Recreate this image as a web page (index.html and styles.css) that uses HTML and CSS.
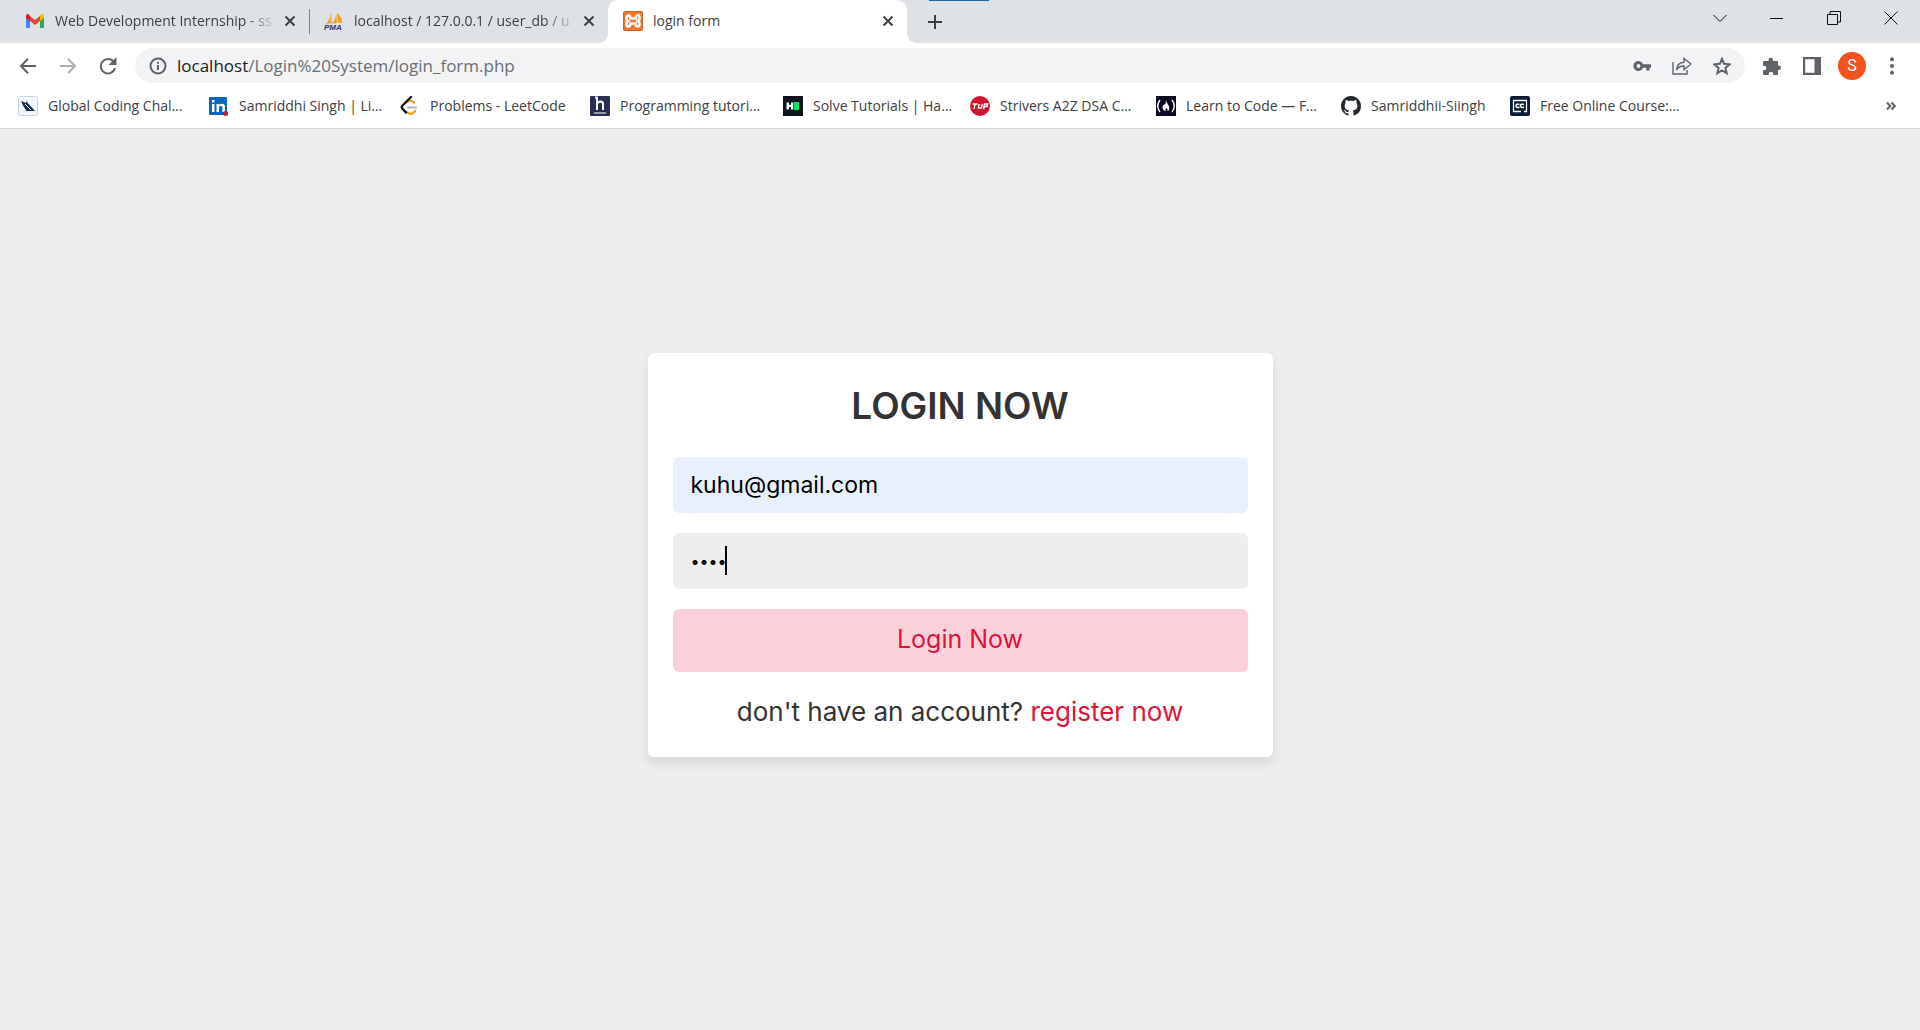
FILE: index.html
```html
<!DOCTYPE html>
<html lang="en">
<head>
<meta charset="utf-8">
<meta name="viewport" content="width=device-width, initial-scale=1">
<title>login form</title>
<link rel="stylesheet" href="styles.css">
</head>
<body>
<header class="browser">
  <div class="tabstrip">
    <div class="tab">
      <svg class="favicon" viewBox="0 0 20 20"><path fill="#4285f4" d="M1 5v11q0 1 1 1h3V9z"/><path fill="#34a853" d="M19 5v11q0 1-1 1h-3V9z"/><path fill="#ea4335" d="M5 5l5 4 5-4v5l-5 4-5-4z"/><path fill="#c5221f" d="M1 5q0-2 2-2 1 0 2 2v5L1 7z"/><path fill="#fbbc04" d="M19 5q0-2-2-2-1 0-2 2v5l4-3z"/></svg>
      <span class="tab-title faded">Web Development Internship - ss</span>
      <button class="tab-close" aria-label="Close tab"><svg viewBox="0 0 12 12"><path d="M1.500 1.500l9 9m0-9l-9 9"/></svg></button>
    </div>
    <div class="tab divided">
      <svg class="favicon" viewBox="0 0 20 20"><path fill="#f89c0e" d="M7 2q-1 7-5 11l6-1zM12 0q1 8-4 12.500l5-.5zM13 2q5 4 5 10l-4-.5z"/><path fill="#fbc37a" d="M7 2l1 7-2 3z"/><text x="0" y="19" class="pma">PMA</text></svg>
      <span class="tab-title faded">localhost / 127.0.0.1 / user_db / u</span>
      <button class="tab-close" aria-label="Close tab"><svg viewBox="0 0 12 12"><path d="M1.500 1.500l9 9m0-9l-9 9"/></svg></button>
    </div>
    <div class="tab active">
      <svg class="favicon" viewBox="0 0 20 20"><rect width="20" height="20" rx="2" fill="#cf6220"/><rect x="1" y="1" width="18" height="18" rx="2" fill="#f0762a"/><path fill="none" stroke="#fff" stroke-width="2.600" stroke-linejoin="round" d="M7.500 7.500Q7.500 4.500 5.500 4.500T3.500 7q0 3 2.500 3-2.500 0-2.500 3t2 2.500 2-3h5q0 3 2 3t2-2.500q0-3-2.500-3 2.500 0 2.500-3t-2-2.500-2 3z"/></svg>
      <span class="tab-title">login form</span>
      <button class="tab-close" aria-label="Close tab"><svg viewBox="0 0 12 12"><path d="M1.500 1.500l9 9m0-9l-9 9"/></svg></button>
    </div>
    <button class="new-tab" aria-label="New tab"><svg viewBox="0 0 16 16"><path d="M8 1v14M1 8h14"/></svg></button>
    <div class="window-controls">
      <button aria-label="Search tabs"><svg viewBox="0 0 14 14"><path d="M.5 4L7 10.500 13.500 4"/></svg></button>
      <button aria-label="Minimize"><svg viewBox="0 0 14 14"><path d="M0 7.500h13"/></svg></button>
      <button aria-label="Restore"><svg viewBox="0 0 14 14"><path d="M.5 3.500h10v10H.5zM3 3V.5h10.500V11H11"/></svg></button>
      <button aria-label="Close"><svg viewBox="0 0 14 14"><path d="M.5.5l13 13m0-13l-13 13"/></svg></button>
    </div>
    <span class="accent-line"></span>
  </div>

  <nav class="toolbar" aria-label="Navigation">
    <button class="tool" aria-label="Back"><svg viewBox="0 0 18 18"><path class="line" d="M17 9H2.500M9 1.800L2 9l7 7.200"/></svg></button>
    <button class="tool dim" aria-label="Forward"><svg viewBox="0 0 18 18"><path class="line" d="M1 9h14.500M9 1.800L16 9l-7 7.200"/></svg></button>
    <button class="tool" aria-label="Reload"><svg viewBox="0 0 18 18"><path class="line" d="M15 5.200A7.200 7.200 0 1 0 16 11"/><path d="M17.500 0v8h-8z"/></svg></button>
    <div class="address">
      <svg class="info" viewBox="0 0 18 18"><circle class="line" cx="9" cy="9" r="7.500"/><path d="M8 8h2v5H8zM8 4.800h2v2H8z"/></svg>
      <span class="url"><b>localhost</b>/Login%20System/login_form.php</span>
      <button class="tool" aria-label="Passwords"><svg viewBox="0 0 18 18"><path fill-rule="evenodd" d="M10 7.200h8v3.600h-1.500v2.700h-3.200v-2.700H10A5 5 0 1 1 10 7.200zM5.500 7.100a1.900 1.900 0 1 0 0 3.800 1.900 1.900 0 0 0 0-3.800z"/></svg></button>
      <button class="tool" aria-label="Share"><svg class="wide" viewBox="0 0 20 20"><path class="thin" d="M1 6v12h14v-4M4.500 14Q5 6.500 12 6.200V2.500L19 8l-7 5.500V10Q7 9.800 4.500 14z"/></svg></button>
      <button class="tool" aria-label="Bookmark"><svg viewBox="0 0 18 18"><path class="star" d="M9 1.800l2.100 5 5.500.5-4.200 3.600 1.300 5.300L9 13.400l-4.700 2.800 1.300-5.300L1.400 7.300l5.500-.5z"/></svg></button>
    </div>
    <button class="tool" aria-label="Extensions"><svg viewBox="0 0 18 18"><path d="M1 4h4.500V3a2.200 2.200 0 0 1 4.400 0v1H14q1 0 1 1v3.500h.8a2.200 2.200 0 0 1 0 4.400H15V17q0 1-1 1h-3.700v-1a2.300 2.300 0 0 0-4.600 0v1H1q-1 0-1-1v-3.700h1a2.300 2.300 0 0 0 0-4.600H0V5q0-1 1-1z"/></svg></button>
    <button class="tool" aria-label="Side panel"><svg viewBox="0 0 18 18"><path fill-rule="evenodd" d="M0 0h18v18H0zM2.200 2.200v13.600h9.300V2.200z"/></svg></button>
    <button class="tool" aria-label="Profile"><span class="avatar">S</span></button>
    <button class="tool" aria-label="Menu"><svg viewBox="0 0 18 18"><circle cx="9" cy="2.200" r="2"/><circle cx="9" cy="9" r="2"/><circle cx="9" cy="15.800" r="2"/></svg></button>
  </nav>

  <nav class="bookmarks" aria-label="Bookmarks">
    <a href="#"><svg viewBox="0 0 20 20"><rect x=".5" y=".5" width="19" height="19" rx="2" fill="#f3f7fb" stroke="#c3d3e4"/><path fill="#14304f" d="M3 5l5 2 0-2 9 10H8.500L5 9.500z"/><path stroke="#f3f7fb" d="M7 8l6 6"/></svg>Global Coding Chal…</a>
    <a href="#"><svg viewBox="0 0 20 20"><rect y="1" width="18" height="18" rx="1" fill="#0a66c2"/><path fill="#fff" d="M3 8h2.500v8H3zM3 4h2.500v2.500H3zM7.500 8H10v1q1-1.300 2.700-1.300Q16 7.700 16 11v5h-2.600v-4.500q0-1.700-1.500-1.700T10 11.500V16H7.500z"/><circle cx="16.500" cy="17.500" r="2.500" fill="#cb112d"/></svg>Samriddhi Singh | Li…</a>
    <a href="#"><svg viewBox="0 0 20 20"><path fill="none" stroke="#f5a31c" stroke-width="2.400" stroke-linecap="round" d="M7 6q3-3 6 0l1 1M7 16q4 4 8-1"/><path fill="none" stroke="#111" stroke-width="2.400" stroke-linecap="round" d="M11 1L2.500 9.500q-1.500 1.500 0 3.200L6 16.500"/><path stroke="#b3b3b3" stroke-width="2.200" stroke-linecap="round" d="M8 11.500h8"/></svg>Problems - LeetCode</a>
    <a href="#"><svg viewBox="0 0 20 20"><rect width="20" height="20" rx="1" fill="#2b2f52"/><path fill="none" stroke="#fff" stroke-width="2" d="M5 1.500h2v12.500M7 8q1-2.500 3.500-2.500T13 8v6"/><path stroke="#fff" d="M4 17h12"/></svg>Programming tutori…</a>
    <a href="#"><svg viewBox="0 0 20 20"><path fill="#0e141e" d="M0 0h20v20H0z"/><path fill="#fff" d="M3.500 6.500H6v2.300h2V6.500h2.300v7H8v-2.500H6v2.500H3.500z"/><path fill="#00ea64" d="M11 6h5v8h-5z"/></svg>Solve Tutorials | Ha…</a>
    <a href="#"><svg viewBox="0 0 20 20"><circle cx="10" cy="10" r="10" fill="#d3152c"/><path fill="none" stroke="#fff" stroke-width="1.500" d="M2.500 8h5M5 8l-.8 5M9 8l-.6 4h3l.8-4M13.600 13l.9-5h3l-.4 2.500h-3"/></svg>Strivers A2Z DSA C…</a>
    <a href="#"><svg viewBox="0 0 20 20"><path fill="#0a0a23" d="M0 0h20v20H0z"/><path fill="none" stroke="#fff" stroke-width="1.400" d="M4 4q-4.500 6 0 12M16 4q4.500 6 0 12"/><path fill="#fff" d="M10 4q0 2 2 4.500T13 14l-1.500 1q.5-2-1-3-1.500 1-1 3-3-1-3-3.500Q6.500 8.500 9.500 8z"/></svg>Learn to Code — F…</a>
    <a href="#"><svg viewBox="0 0 16 16"><path fill="#24292f" d="M8 0C3.580 0 0 3.580 0 8c0 3.540 2.290 6.530 5.470 7.590.4.070.55-.17.55-.38 0-.19-.01-.82-.01-1.490-2.010.37-2.530-.49-2.690-.94-.09-.23-.48-.94-.82-1.130-.28-.15-.68-.52-.01-.53.630-.010 1.080.58 1.230.82.72 1.210 1.870.87 2.330.66.07-.52.28-.87.51-1.070-1.780-.2-3.640-.89-3.640-3.950 0-.87.31-1.590.82-2.150-.08-.2-.36-1.020.08-2.120 0 0 .67-.21 2.200.82.64-.18 1.320-.27 2-.27s1.360.09 2 .27c1.530-1.040 2.200-.82 2.200-.82.44 1.100.16 1.920.08 2.120.51.56.82 1.270.82 2.150 0 3.070-1.870 3.750-3.650 3.950.29.25.54.73.54 1.480 0 1.070-.01 1.930-.01 2.200 0 .21.15.46.55.38A8.010 8.010 0 0 0 16 8c0-4.420-3.580-8-8-8z"/></svg>Samriddhii-Siingh</a>
    <a href="#"><svg viewBox="0 0 20 20"><rect width="20" height="20" rx="2" fill="#0a1c3a"/><path fill="none" stroke="#fff" stroke-width="1.300" d="M11 15.500H3.500v-11h13v11H14"/><path fill="none" stroke="#fff" stroke-width="1.500" d="M9.500 8.500q-3.500-1-3.500 1.300t3.500 1.400M14 8.500q-3.500-1-3.500 1.300t3.500 1.400"/></svg>Free Online Course:…</a>
    <button class="more" aria-label="More bookmarks"><svg viewBox="0 0 10 10"><path d="M1 1.500L4.300 5 1 8.500M5.500 1.500L8.800 5 5.500 8.500"/></svg></button>
  </nav>
</header>

<main class="page">
  <form class="card">
    <h1>LOGIN NOW</h1>
    <input class="field filled" type="email" aria-label="Email" value="kuhu@gmail.com">
    <div class="password">
      <input class="field" type="password" aria-label="Password" value="1234">
      <span class="caret"></span>
    </div>
    <button class="submit" type="button">Login Now</button>
    <p>don't have an account? <a href="#">register now</a></p>
  </form>
</main>
</body>
</html>
```
FILE: styles.css
```css
* { box-sizing: border-box; margin: 0; padding: 0; }
body {
  min-height: 100vh;
  display: flex;
  flex-direction: column;
  background: #eee;
  font-family: "Open Sans", "Noto Sans", sans-serif;
  font-size: 14px;
  color: #3c4043;
}
button { border: 0; background: none; font: inherit; color: inherit; }
a { text-decoration: none; color: inherit; }
.browser { background: #fff; border-bottom: 1px solid #d5d6d8; }

.tabstrip {
  position: relative;
  display: flex;
  height: 43px;
  padding-left: 10px;
  background: #dee1e6;
}
.tab {
  position: relative;
  display: flex;
  align-items: center;
  width: 299px;
  padding: 0 13px 2px 15px;
}
.favicon { flex: none; width: 20px; height: 20px; margin-right: 10px; }
.pma { font: italic bold 8px "Liberation Sans", sans-serif; fill: #2f3566; }
.tab-title { flex: 1; overflow: hidden; white-space: nowrap; }
.faded {
  -webkit-mask-image: linear-gradient(to right, #000 190px, transparent 222px);
  mask-image: linear-gradient(to right, #000 190px, transparent 222px);
}
.tab-close { display: flex; margin-left: 10px; }
.tab-close svg { width: 12px; height: 12px; stroke: #3c4043; stroke-width: 2; }
.divided::before {
  content: "";
  position: absolute;
  left: 0;
  top: 9px;
  width: 1px;
  height: 25px;
  background: #808387;
}
.active { background: #fff; border-radius: 10px 10px 0 0; }
.active::before, .active::after {
  content: "";
  position: absolute;
  bottom: 0;
  width: 10px;
  height: 10px;
}
.active::before { right: 100%; background: radial-gradient(circle at 0 0, transparent 10px, #fff 10px); }
.active::after { left: 100%; background: radial-gradient(circle at 100% 0, transparent 10px, #fff 10px); }
.new-tab { display: flex; align-items: center; padding-left: 20px; }
.new-tab svg { width: 16px; height: 16px; stroke: #3c4043; stroke-width: 2; }
.window-controls { display: flex; height: 36px; margin-left: auto; padding-right: 1px; }
.window-controls button { display: flex; align-items: center; justify-content: center; width: 57px; }
.window-controls svg { width: 14px; height: 14px; fill: none; stroke: #111; }
.accent-line { position: absolute; left: 929px; top: 0; width: 60px; height: 1px; background: #1a66a8; }

.toolbar { display: flex; align-items: center; height: 45px; padding: 0 8px; }
.tool { flex: none; display: flex; align-items: center; justify-content: center; width: 40px; height: 35px; color: #5f6368; }
.tool svg, .info { width: 18px; height: 18px; fill: #5f6368; }
.tool .wide { width: 20px; height: 20px; }
.line { fill: none; stroke: #5f6368; stroke-width: 2; }
.tool .thin { fill: none; stroke: #5f6368; stroke-width: 1.4; }
.star { fill: none; stroke: #5f6368; stroke-width: 2; }
.dim { opacity: .5; }
.address {
  flex: 1;
  display: flex;
  align-items: center;
  height: 35px;
  margin: 0 7px;
  padding: 0 3px 0 14px;
  border-radius: 18px;
  background: #f1f3f4;
}
.url { flex: 1; margin-left: 10px; font-size: 17px; color: #6a6e73; }
.url b { font-weight: 400; color: #202124; }
.avatar {
  width: 28px;
  height: 28px;
  border-radius: 50%;
  background: #f4511e;
  color: #fff;
  font: 16px/28px Roboto, sans-serif;
}

.bookmarks {
  display: grid;
  grid-template-columns: 191px 191px 190px 193px 187px 186px 185px 169px 1fr auto;
  height: 40px;
  padding: 0 24px 5px 18px;
}
.bookmarks a { display: flex; align-items: center; gap: 10px; white-space: nowrap; }
.bookmarks svg { flex: none; width: 20px; height: 20px; }
.bookmarks .more { display: flex; align-items: center; }
.bookmarks .more svg { width: 10px; height: 10px; fill: none; stroke: #5f6368; stroke-width: 2; }

.page {
  flex: 1;
  display: flex;
  align-items: center;
  justify-content: center;
  padding: 25px 25px 75px;
  font-family: Inter, sans-serif;
}
.card {
  width: 625px;
  padding: 25px;
  border-radius: 6px;
  background: #fff;
  box-shadow: 0 6px 12px rgba(0, 0, 0, .1);
  text-align: center;
  color: #333;
}
h1 { margin-bottom: 23px; font-size: 37px; line-height: 56px; font-weight: 600; }
.field {
  display: block;
  width: 100%;
  height: 56px;
  padding: 0 18px;
  margin-bottom: 20px;
  border: 0;
  border-radius: 6px;
  background: #eee;
  font: 23px Inter, sans-serif;
  color: #000;
}
.password .field { font-size: 16px; }
.filled { background: #e8f0fe; }
.password { position: relative; }
.caret { position: absolute; left: 52px; top: 13px; width: 2px; height: 29px; background: #000; }
.submit {
  display: block;
  width: 100%;
  height: 63px;
  padding-bottom: 2px;
  border-radius: 6px;
  background: #fbd0d9;
  color: #dc143c;
  font-size: 25px;
}
.card p { margin-top: 21px; padding-bottom: 2px; font-size: 26px; line-height: 37px; }
.card p a { color: #dc143c; }
```
